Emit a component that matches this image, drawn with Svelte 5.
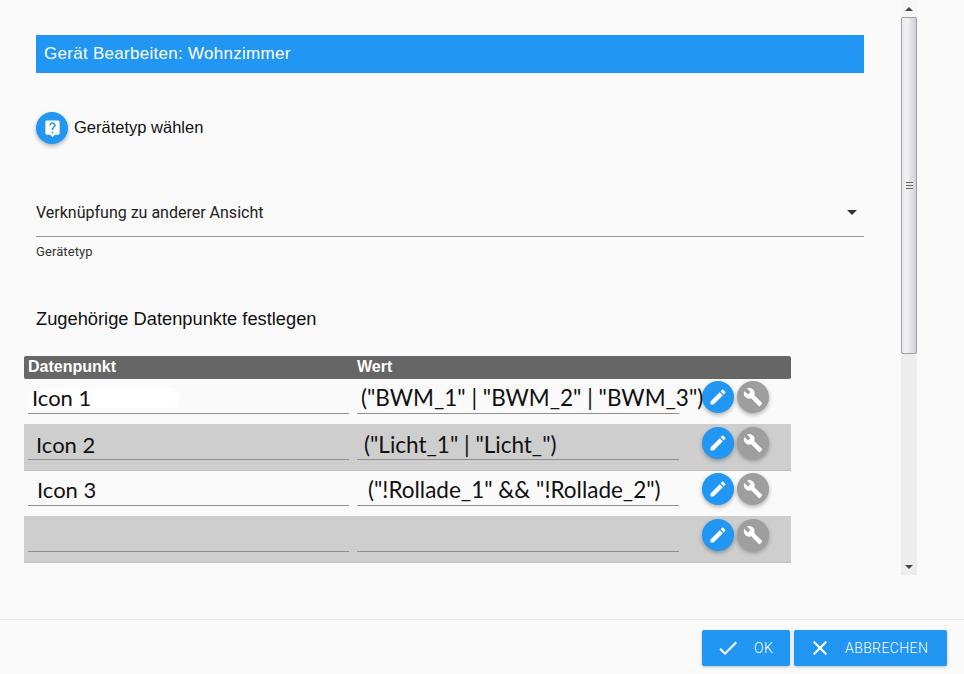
<script lang="ts">
	const rows = [
		{ name: 'Icon 1', value: '("BWM_1" | "BWM_2" | "BWM_3")', nameIndent: 4, valueIndent: 4, blob: true },
		{ name: 'Icon 2', value: '("Licht_1" | "Licht_")', nameIndent: 8, valueIndent: 7, blob: false },
		{ name: 'Icon 3', value: '("!Rollade_1" && "!Rollade_2")', nameIndent: 9, valueIndent: 11, blob: false },
		{ name: '', value: '', nameIndent: 0, valueIndent: 0, blob: false }
	];
</script>

<div class="page">
	<div class="body">
		<main class="content">
			<h1 class="title">Gerät Bearbeiten: Wohnzimmer</h1>

			<div class="type-row">
				<button class="fab blue" aria-label="Hilfe">
					<svg viewBox="0 0 24 24" width="19" height="19"><path d="M19 2H5c-1.11 0-2 .9-2 2v14c0 1.1.89 2 2 2h4l3 3 3-3h4c1.1 0 2-.9 2-2V4c0-1.1-.9-2-2-2zm-6 16h-2v-2h2v2zm2.07-7.75l-.9.92C13.45 11.9 13 12.5 13 14h-2v-.5c0-1.1.45-2.1 1.17-2.83l1.24-1.26c.37-.36.59-.86.59-1.41 0-1.1-.9-2-2-2s-2 .9-2 2H8c0-2.21 1.79-4 4-4s4 1.79 4 4c0 .88-.36 1.68-.93 2.25z" /></svg>
				</button>
				<span>Gerätetyp wählen</span>
			</div>

			<div class="select">
				<span>Verknüpfung zu anderer Ansicht</span>
				<svg viewBox="0 0 24 24" width="24" height="24"><path d="M7 10l5 5 5-5z" /></svg>
			</div>
			<div class="select-label">Gerätetyp</div>

			<h2 class="section">Zugehörige Datenpunkte festlegen</h2>

			<div class="table">
				<div class="thead">
					<div class="th">Datenpunkt</div>
					<div class="th">Wert</div>
					<div class="th"></div>
				</div>
				{#each rows as row, i}
					<div class="tr" class:odd={i % 2 === 1}>
						<div class="cell">
							{#if row.blob}<span class="blob"></span>{/if}
							<div class="field" style:padding-left="{row.nameIndent}px">{row.name}</div>
						</div>
						<div class="cell">
							<div class="field value" style:padding-left="{row.valueIndent}px">{row.value}</div>
						</div>
						<div class="actions">
							<button class="fab blue" aria-label="Bearbeiten">
								<svg viewBox="0 0 24 24" width="20" height="20"><path d="M3 17.25V21h3.75L17.81 9.94l-3.75-3.75L3 17.25zM20.71 7.04c.39-.39.39-1.02 0-1.41l-2.34-2.34c-.39-.39-1.02-.39-1.41 0l-1.83 1.83 3.75 3.75 1.83-1.83z" /></svg>
							</button>
							<button class="fab grey" aria-label="Einstellungen">
								<svg viewBox="0 0 24 24" width="20" height="20"><path d="M22.7 19l-9.1-9.1c.9-2.3.4-5-1.5-6.9-2-2-5-2.4-7.4-1.3L9 6 6 9 1.6 4.7C.4 7.1.9 10.1 2.9 12.1c1.9 1.9 4.6 2.4 6.9 1.5l9.1 9.1c.4.4 1 .4 1.4 0l2.3-2.3c.5-.4.5-1.1.1-1.4z" /></svg>
							</button>
						</div>
					</div>
				{/each}
			</div>
		</main>

		<div class="scrollbar">
			<div class="arrow"><span class="tri up"></span></div>
			<div class="thumb">
				<span class="grip"></span>
			</div>
			<div class="track"></div>
			<div class="arrow low"><span class="tri down"></span></div>
		</div>
	</div>

	<footer class="footer">
		<button class="btn ok">
			<svg viewBox="0 0 24 24" width="24" height="24"><path d="M9 16.17L4.83 12l-1.42 1.41L9 19 21 7l-1.41-1.41z" /></svg>
			<span>OK</span>
		</button>
		<button class="btn cancel">
			<svg viewBox="0 0 24 24" width="24" height="24"><path d="M19 6.41L17.59 5 12 10.59 6.41 5 5 6.41 10.59 12 5 17.59 6.41 19 12 13.41 17.59 19 19 17.59 13.41 12z" /></svg>
			<span>ABBRECHEN</span>
		</button>
	</footer>
</div>

<style>
	:global(body) {
		background: #fafafa;
	}
	.page {
		width: 964px;
		height: 674px;
		display: flex;
		flex-direction: column;
		overflow: hidden;
		background: #fafafa;
		font-family: 'Liberation Sans', Arial, sans-serif;
		color: #111;
	}
	.body {
		height: 619px;
		display: flex;
		align-items: flex-start;
		flex: none;
	}
	.content {
		width: 828px;
		margin-left: 36px;
		padding-top: 35px;
	}
	.title {
		margin: 0;
		height: 38px;
		line-height: 38px;
		padding-left: 8px;
		background: #2196f3;
		color: #fff;
		font-size: 17px;
		font-weight: 400;
		letter-spacing: 0.28px;
	}
	.type-row {
		display: flex;
		align-items: center;
		gap: 6px;
		margin-top: 39px;
		font-size: 16.5px;
	}
	.type-row span {
		padding-bottom: 2px;
	}
	.fab {
		width: 32px;
		height: 32px;
		flex: none;
		padding: 0;
		border: 0;
		border-radius: 50%;
		display: flex;
		align-items: center;
		justify-content: center;
		box-shadow: 0 2px 4px rgba(0, 0, 0, 0.3);
	}
	.fab svg {
		fill: #fff;
	}
	.blue {
		background: #2196f3;
	}
	.grey {
		background: #9e9e9e;
	}
	.select {
		margin-top: 49px;
		height: 38px;
		padding-bottom: 5px;
		display: flex;
		align-items: center;
		justify-content: space-between;
		border-bottom: 1px solid #9a9a9a;
		font-family: Roboto, sans-serif;
		font-size: 16px;
		color: #222;
	}
	.select svg {
		fill: #333;
		margin-top: -1px;
	}
	.select-label {
		margin-top: 8px;
		font-family: Roboto, sans-serif;
		font-size: 13px;
		letter-spacing: 0.1px;
		line-height: 14px;
		color: #333;
	}
	.section {
		margin: 50px 0 0;
		font-size: 18.3px;
		line-height: 20px;
		font-weight: 400;
		font-family: 'Liberation Sans', Arial, sans-serif;
		color: #111;
	}
	.table {
		margin: 27px 0 0 -12px;
		width: 767px;
	}
	.thead {
		height: 23px;
		display: grid;
		grid-template-columns: 329px 330px 108px;
		background: #666;
		border-radius: 2px;
	}
	.th {
		padding-left: 4px;
		color: #fff;
		font-size: 16px;
		font-weight: 700;
		line-height: 21px;
		border-right: 1px solid;
		border-image: linear-gradient(#e8e8e8 0 1px, #666 1px 22px, #e8e8e8 22px) 1;
	}
	.th:last-child {
		border-right: 0;
	}
	.tr {
		height: 45px;
		box-sizing: border-box;
		display: grid;
		grid-template-columns: 329px 330px 108px;
	}
	.tr.odd {
		height: 47px;
		background: #cecece;
		border-bottom: 1px solid #c0c0c0;
	}
	.cell {
		position: relative;
		padding: 0 4px;
	}
	.blob {
		position: absolute;
		left: 4px;
		top: 9px;
		width: 152px;
		height: 20px;
		background: #fff;
		border-radius: 10px;
	}
	.field {
		position: relative;
		height: 34px;
		line-height: 38px;
		font-family: Lato, sans-serif;
		font-size: 22px;
		white-space: nowrap;
		color: #111;
		border-bottom: 1px solid #8f8f8f;
	}
	.field.value {
		font-size: 22.5px;
	}
	.odd .field {
		height: 35px;
		line-height: 42px;
	}
	.actions {
		display: flex;
		gap: 3px;
		padding: 2px 0 0 19px;
	}
	.odd .actions {
		padding-top: 3px;
	}
	.footer {
		flex: 1;
		border-top: 1px solid #e6e6e6;
		display: flex;
		justify-content: flex-end;
		gap: 4px;
		padding: 10px 17px 0 0;
	}
	.btn {
		height: 36px;
		padding: 0;
		border: 0;
		border-radius: 2px;
		background: #2196f3;
		color: #fff;
		display: flex;
		align-items: center;
		font-family: Roboto, sans-serif;
		font-size: 14px;
		font-weight: 300;
		letter-spacing: 0.4px;
		box-shadow: 0 1px 3px rgba(0, 0, 0, 0.25);
	}
	.btn svg {
		fill: #fff;
	}
	.ok {
		width: 88px;
		padding-left: 14px;
		gap: 14px;
	}
	.cancel {
		width: 153px;
		padding-left: 14px;
		gap: 13px;
	}
	.scrollbar {
		margin-left: 37px;
		width: 16px;
		height: 575px;
		display: flex;
		flex-direction: column;
		background: #ededed;
		box-sizing: border-box;
	}
	.arrow {
		height: 17px;
		display: flex;
		align-items: center;
		justify-content: center;
		background: #f6f6f6;
		flex: none;
	}
	.arrow.low {
		background: #ededed;
	}
	.tri {
		width: 0;
		height: 0;
		border-left: 4px solid transparent;
		border-right: 4px solid transparent;
	}
	.tri.up {
		border-bottom: 4px solid #444;
	}
	.tri.down {
		border-top: 4px solid #444;
	}
	.thumb {
		height: 337px;
		flex: none;
		box-sizing: border-box;
		border: 1px solid #a0a0a0;
		border-radius: 2px;
		background: linear-gradient(to right, #e9e9ec, #f2f2f4 35%, #cfcfd4);
		display: flex;
		align-items: center;
		justify-content: center;
	}
	.grip {
		width: 7px;
		height: 8px;
		background: repeating-linear-gradient(to bottom, #666 0 1px, #e8e8e8 1px 3px);
	}
	.track {
		flex: 1;
	}
</style>
